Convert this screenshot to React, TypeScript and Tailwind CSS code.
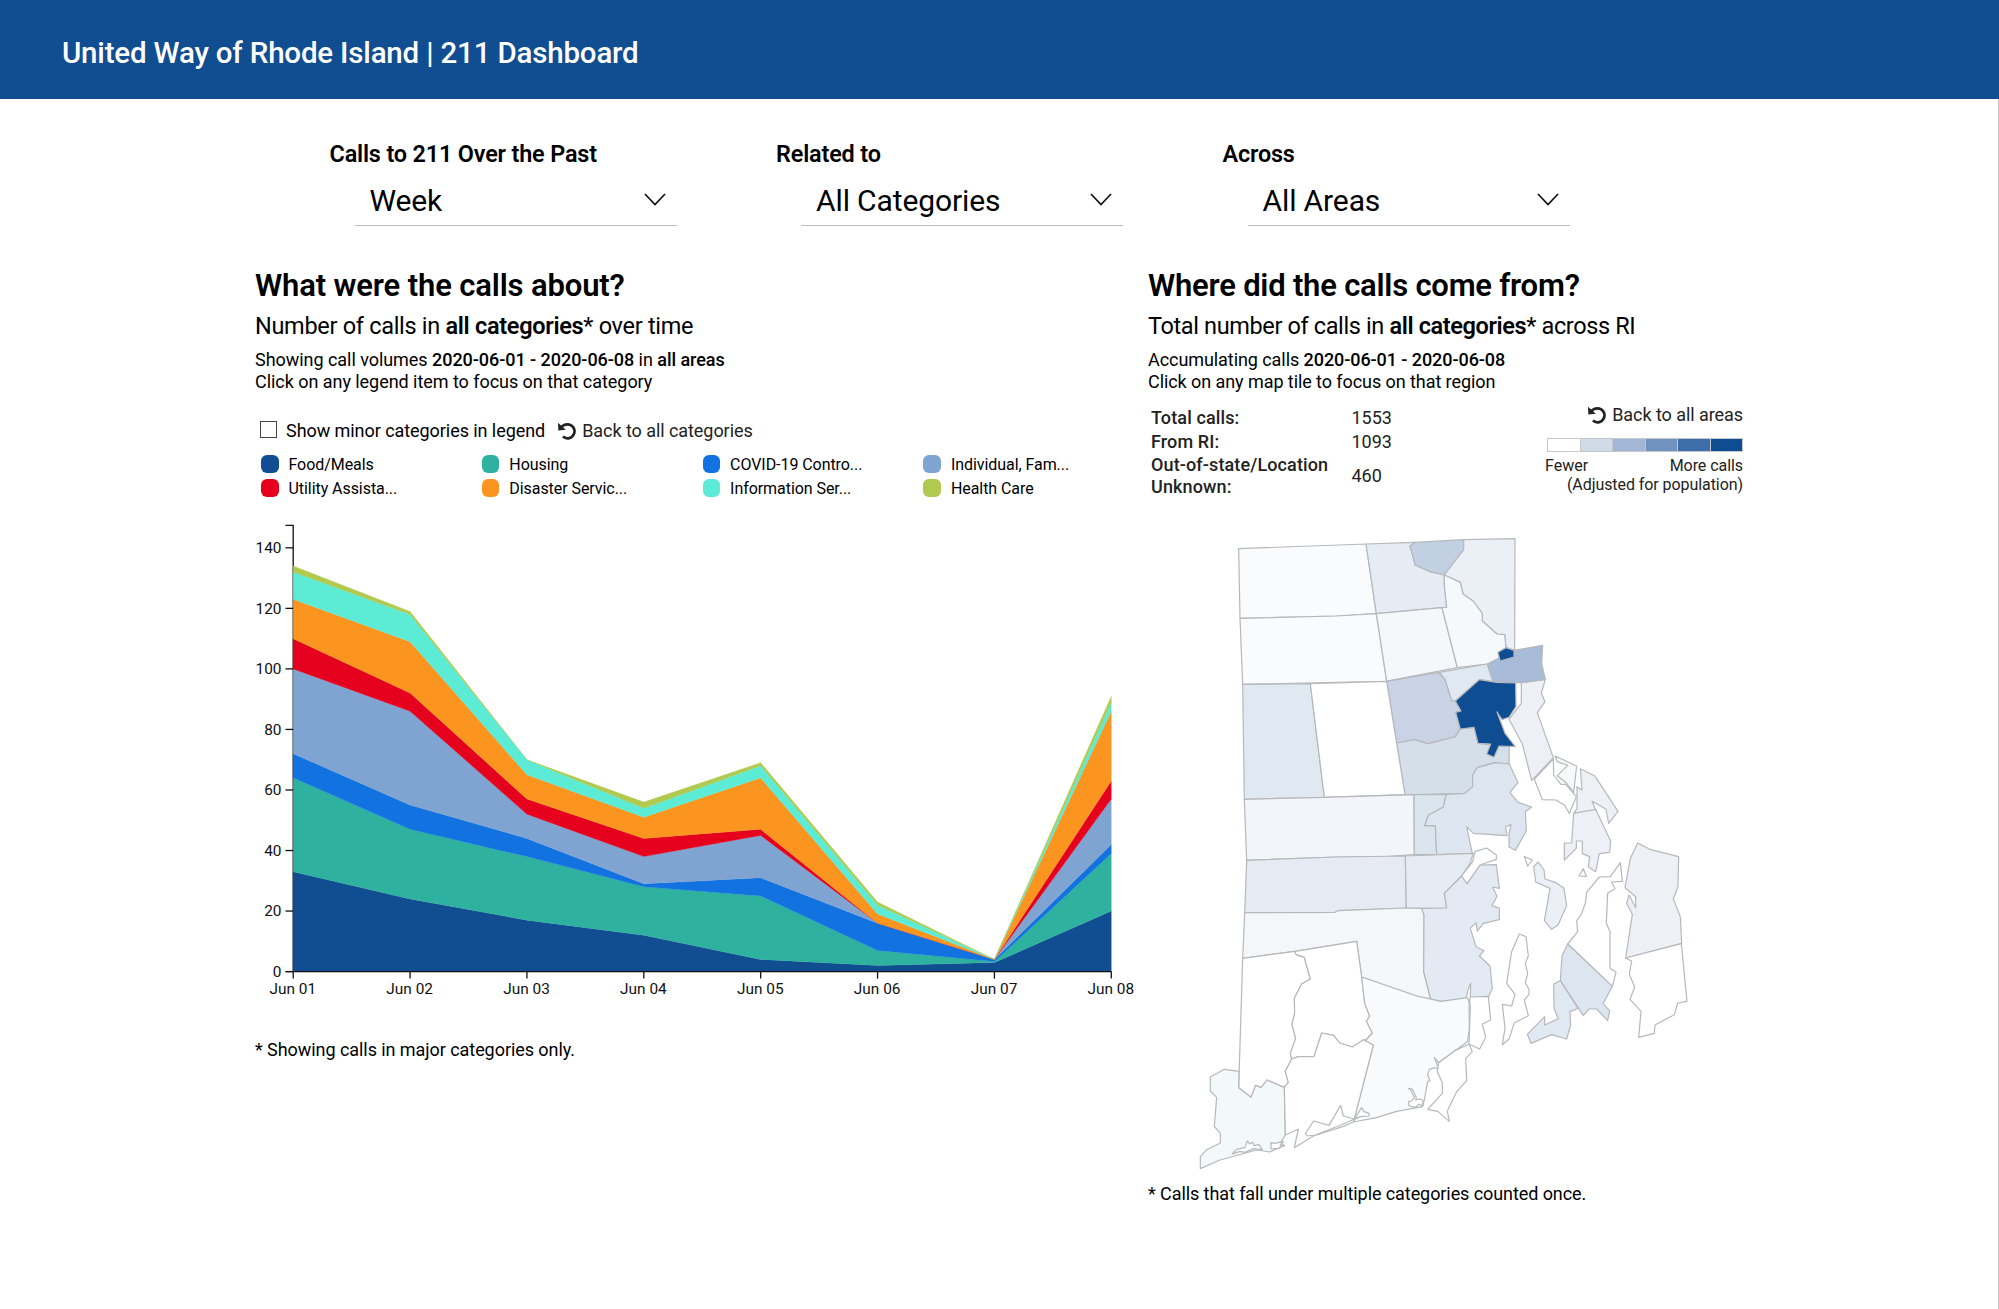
import React from "react";

const DAYS = ["Jun 01", "Jun 02", "Jun 03", "Jun 04", "Jun 05", "Jun 06", "Jun 07", "Jun 08"];

// Upper edge of each stacked band, bottom to top.
const BANDS = [
  { color: "#114d91", top: [33, 24, 17, 12, 4, 2, 3, 20] },
  { color: "#2eb19f", top: [64, 47, 38, 28, 25, 7, 3.3, 39] },
  { color: "#1172e0", top: [72, 55, 44, 29, 31, 16, 4, 42] },
  { color: "#80a4d1", top: [100, 86, 52, 38, 45, 16, 4, 57] },
  { color: "#e5001e", top: [110, 92, 57, 44, 47, 16, 4, 63] },
  { color: "#fc951f", top: [123, 109, 65, 51, 64, 19, 4, 86] },
  { color: "#5cebd5", top: [132, 118, 70, 54, 68, 22, 4, 89] },
  { color: "#b1c94e", top: [134, 119, 70, 56, 69, 23, 4, 91] },
];

const LEGEND = [
  { name: "Food/Meals", color: "bg-[#114d91]" },
  { name: "Housing", color: "bg-[#2eb19f]" },
  { name: "COVID-19 Contro...", color: "bg-[#1172e0]" },
  { name: "Individual, Fam...", color: "bg-[#80a4d1]" },
  { name: "Utility Assista...", color: "bg-[#e5001e]" },
  { name: "Disaster Servic...", color: "bg-[#fc951f]" },
  { name: "Information Ser...", color: "bg-[#5cebd5]" },
  { name: "Health Care", color: "bg-[#b1c94e]" },
];

const X0 = 38.2;
const Y0 = 461.6;
const px = (i: number) => X0 + i * 116.87;
const py = (v: number) => Y0 - v * 3.027;

function AreaChart() {
  const zero = DAYS.map(() => 0);
  return (
    <svg width="890" height="490" viewBox="0 0 890 490" className="block overflow-visible">
      <path d={`M30.5 ${py(147.4)}H${X0}V${Y0}H30.5`} fill="none" stroke="#111" strokeWidth="1.3" />
      {BANDS.map((b, k) => {
        const low = k ? BANDS[k - 1].top : zero;
        const up = b.top.map((v, i) => `${px(i)},${py(v)}`);
        const down = low.map((v, i) => `${px(i)},${py(v)}`).reverse();
        return <polygon key={b.color} points={[...up, ...down].join(" ")} fill={b.color} stroke={b.color} strokeWidth="0.3" />;
      })}
      {[0, 20, 40, 60, 80, 100, 120, 140].map((v) => (
        <g key={v}>
          <path d={`M30.5 ${py(v)}H${X0}`} stroke="#111" strokeWidth="1.3" />
          <text x="26.5" y={py(v) + 5.4} textAnchor="end" fontSize="15.4" fill="#111">{v}</text>
        </g>
      ))}
      <path d={`M${X0} ${Y0}H${px(7)}`} stroke="#111" strokeWidth="1.4" />
      {DAYS.map((d, i) => (
        <g key={d}>
          <path d={`M${px(i)} ${Y0}v7`} stroke="#111" strokeWidth="1.3" />
          <text x={px(i) - 0.4} y="484" textAnchor="middle" fontSize="15.4" fill="#111">{d}</text>
        </g>
      ))}
    </svg>
  );
}

type Region = { fill: string; p: string; dx?: number; dy?: number };

const REGIONS: Region[] = [
  { fill: "#f9fbfc", p: "146,86 528,72 559,281 440,288 150,295" },
  { fill: "#e6ecf4", p: "528,72 675,67 660,78 676,135 720,155 763,165 763,195 770,262 756,263 559,281" },
  { fill: "#c2d0e4", p: "675,67 821,59 821,89 763,165 720,155 676,135 660,78" },
  { fill: "#ebf0f6", p: "821,59 975,56 974,391 948,383 944,344 921,342 877,303 877,280 849,243 819,222 811,187 763,165 821,89" },
  { fill: "#f9fbfd", p: "150,295 440,288 559,281 590,484 158,493" },
  { fill: "#f5f8fb", p: "559,281 756,263 802,443 590,483" },
  { fill: "#f6f9fb", p: "763,165 811,187 819,222 849,243 877,280 877,303 921,342 944,344 948,383 924,397 930,424 892,432 802,443 756,263 770,262 763,195" },
  { fill: "#d5dfea", p: "620,669 673,658 715,671 795,650 811,627 852,622 864,670 958,680 957,734 915,728 862,743 848,765 848,800 825,820 720,823 645,825" },
  { fill: "#e0e8f1", p: "748,457 892,432 909,485 868,479 796,543 785,543 765,478" },
  { fill: "#c8d4e6", p: "590,484 744,457 765,478 785,543 796,543 813,573 797,577 811,627 795,650 715,671 673,658 620,669" },
  { fill: "#edf1f6", dx: 720, p: "274,488 346,478 334,520 345,545 322,578 370,713 305,782 277,672 237,598 274,550" },
  { fill: "#a8bcd9", p: "972,391 1058,376 1055,430 1066,478 993,488 909,485 892,432" },
  { fill: "#e0e8f1", p: "158,493 361,491 403,832 163,838" },
  { fill: "#ffffff", p: "361,491 590,484 645,824 403,832" },
  { fill: "#f2f5f9", p: "163,838 403,832 672,824 673,1004 600,1009 440,1011 170,1021" },
  { fill: "#dae5ee", p: "672,824 769,823 760,861 715,886 704,917 736,917 740,1004 673,1004" },
  { fill: "#dde5f0", p: "769,823 825,820 848,800 848,765 862,743 915,728 958,732 984,788 960,817 984,847 1025,861 1006,875 1009,933 976,991 957,981 957,940 963,914 947,921 951,947 850,940 830,920 847,1000 740,1004 736,917 704,917 715,886 760,861" },
  { fill: "#e5eaf3", p: "170,1021 440,1011 646,1008 649,1164 445,1172 435,1177 164,1178" },
  { fill: "#e6ecf4", p: "646,1008 850,1000 840,1030 815,1068 763,1120 770,1164 649,1165" },
  { fill: "#f3f7fa", p: "164,1178 435,1177 445,1172 649,1164 695,1165 702,1185 701,1355 722,1437 680,1428 515,1371 500,1264 315,1294 158,1315" },
  { fill: "#e4eaf3", p: "695,1165 770,1164 763,1120 815,1068 831,1091 870,1035 919,1034 928,1105 908,1101 921,1129 906,1157 928,1165 928,1199 880,1210 862,1233 858,1208 841,1225 858,1280 882,1292 868,1308 900,1338 907,1405 897,1429 753,1444 722,1437 701,1355 702,1185" },
  { fill: "#ffffff", p: "855,995 890,984 919,1005 919,1018 870,1035 831,1091 815,1068 848,1025" },
  { fill: "#ffffff", p: "158,1315 315,1294 318,1303 343,1312 361,1377 335,1392 313,1435 314,1480 306,1513 317,1555 301,1600 305,1617 286,1654 295,1688 281,1702 231,1680 213,1703 197,1696 183,1732 146,1703" },
  { fill: "#ffffff", p: "315,1294 500,1264 515,1371 524,1450 539,1489 529,1503 547,1539 528,1560 487,1581 449,1569 431,1546 395,1539 372,1610 325,1610 305,1617 301,1600 317,1555 306,1513 314,1480 313,1435 335,1392 361,1377 343,1312 318,1303" },
  { fill: "#f3f8fb", p: "147,1654 103,1648 61,1671 61,1713 80,1732 73,1820 91,1840 91,1869 50,1889 31,1910 31,1946 90,1920 200,1890 240,1896 283,1877 272,1867 286,1845 283,1702 231,1680 213,1703 197,1696 183,1732 146,1703" },
  { fill: "#f8fafb", p: "515,1371 680,1428 753,1444 837,1432 838,1530 832,1565 795,1592 745,1628 733,1612 747,1650 735,1643 718,1648 713,1665 720,1682 713,1685 703,1740 698,1760 620,1774 560,1793 490,1806 493,1796 550,1575 520,1559 528,1560 547,1539 529,1503 539,1489 524,1450" },
  { fill: "#ffffff", p: "305,1617 325,1610 372,1610 395,1539 431,1546 449,1569 487,1581 520,1559 550,1575 493,1796 490,1806 460,1819 370,1848 313,1883 325,1827 286,1845 283,1702 295,1688 286,1654" },
  { fill: "#ffffff", p: "493,1797 460,1788 452,1756 417,1816 371,1803 346,1840 352,1848 376,1845 460,1812" },
  { fill: "#ffffff", dy: 780, p: "493,1018 515,983 522,995 537,1000 537,1008 510,1010" },
  { fill: "#ffffff", dy: 780, p: "127,1122 140,1108 165,1103 172,1083 180,1092 188,1087 192,1097 207,1094 217,1109 190,1106 165,1117 150,1114" },
  { fill: "#ffffff", dy: 780, p: "243,1088 255,1090 280,1085 270,1096 283,1097 265,1104 243,1107" },
  { fill: "#ffffff", dx: 570, dy: 1140, p: "85,565 97,567 109,593 107,600 120,597 129,602 128,618 118,613 105,622 88,618 85,605 95,603 103,592 90,567" },
  { fill: "#ffffff", dx: 570, dy: 1140, p: "268,291 325,289 332,360 307,372 317,412 299,447 267,432 271,322" },
  { fill: "#ffffff", dx: 570, dy: 1140, p: "267,432 277,455 257,475 260,542 230,575 202,633 208,664 173,634 143,628 187,580 187,548 172,515 176,488 225,452" },
  { fill: "#ffffff", dx: 570, dy: 1140, p: "272,250 264,270 260,290 268,305 271,290" },
  { fill: "#ffffff", dx: 570, dy: 1140, p: "418,102 438,110 445,168 436,190 443,220 436,248 447,268 447,283 433,300 445,347 403,368 387,418 367,434 375,385 367,313 395,318 405,283 380,250 395,155" },
  { fill: "#ebf0f6", dx: 720, dy: 660, p: "325,366 342,390 345,417 378,428 402,445 410,497 384,555 365,568 343,542 360,445 317,426 311,380" },
  { fill: "#ffffff", dx: 720, dy: 660, p: "283,350 307,360 293,378" },
  { fill: "#ffffff", dx: 720, dy: 660, p: "460,386 469,409 447,408" },
  { fill: "#ffffff", dx: 720, dy: 660, p: "571,368 577,424 545,426 555,446 533,460 529,550 540,575 540,685 558,697 547,739 413,612 443,575 440,542 453,525 466,490 470,457 508,411 541,410" },
  { fill: "#dde5f0", dx: 570, dy: 1140, p: "563,132 697,259 669,311 689,332 683,362 650,327 627,327 610,347 541,242 546,168" },
  { fill: "#e0e9f2", dx: 570, dy: 1140, p: "541,242 594,325 570,335 572,375 560,417 515,404 453,430 442,403 494,350 494,375 535,356 522,325 521,252" },
  { fill: "#edf1f6", dx: 720, dy: 660, p: "623,309 660,328 746,350 744,440 730,477 751,530 755,610 587,654 607,523 590,490 597,465 617,503 617,470 585,443 601,355" },
  { fill: "#ffffff", dx: 570, dy: 1140, p: "737,174 904,131 921,304 893,309 883,344 825,375 823,400 776,412 783,334 750,298 764,262 748,222 755,184" },
  { fill: "#ffffff", dx: 720, dy: 660, p: "370,57 371,105 393,133 407,133 439,170 418,220 403,195 378,180 337,179 313,117" },
  { fill: "#f6f8fb", dx: 720, dy: 660, p: "375,48 440,78 431,157 410,130 382,107 413,76 382,65" },
  { fill: "#edf1f6", dx: 720, dy: 660, p: "451,86 494,107 564,214 536,250 528,208 486,184 497,210 431,221 441,205 441,140 456,150" },
  { fill: "#edf0f6", dx: 720, dy: 660, p: "431,220 497,208 542,303 539,337 508,341 497,395 475,380 479,350 457,341 457,303 439,303 439,325 403,360 403,309 425,309" },
];

const DARK_REGIONS = [
  "948,383 972,391 972,411 930,423 924,397",
  "868,479 920,487 977,489 978,560 957,592 936,599 921,576 945,640 976,680 927,678 912,712 890,702 902,672 864,670 852,622 811,627 797,577 813,573 796,543",
];

function RhodeIslandMap() {
  return (
    <svg width="510" height="660" viewBox="0 0 1530 1980" className="block">
      <g stroke="#b6b8bb" strokeWidth="3.6" strokeLinejoin="round">
        {REGIONS.map((r, i) => (
          <polygon key={i} points={r.p} fill={r.fill} transform={`translate(${r.dx ?? 0} ${r.dy ?? 0})`} />
        ))}
        {DARK_REGIONS.map((p) => (
          <polygon key={p} points={p} fill="#0f4d92" />
        ))}
      </g>
    </svg>
  );
}

function UndoIcon() {
  return (
    <svg width="20" height="19" viewBox="0 0 20 19" className="shrink-0">
      <path d="M4.2 5.2C6 3.2 8.200 2.300 10.500 2.300a7 7 0 1 1-4.600 12.300" fill="none" stroke="#222" strokeWidth="2.7" />
      <path d="M1 .8l.3 7.600 7.500-.6z" fill="#222" />
    </svg>
  );
}

function Filter({ label, value }: { label: string; value: string }) {
  return (
    <div className="w-[446.5px]">
      <div className="h-8 text-[23.4px] leading-8 font-semibold tracking-[-0.16px]">{label}</div>
      <div className="ml-[25px] mt-1 flex h-[52px] w-[322px] items-center justify-between border-b border-[#bdbdbd] pl-[15px] pr-[11px] pt-[3px]">
        <span className="text-[30px] leading-10 tracking-[-0.12px]">{value}</span>
        <svg width="22" height="13" viewBox="0 0 22 13" className="-mt-[3px]">
          <path d="M1 1l10 10.500L21 1" fill="none" stroke="#111" strokeWidth="1.7" />
        </svg>
      </div>
    </div>
  );
}

export default function App() {
  return (
    <div className="h-[1309px] w-[1999px] overflow-hidden bg-white font-['Roboto',sans-serif] whitespace-nowrap text-black">
      <header className="flex h-[99px] items-center bg-[#114d91] pl-[62px] pb-[2px] pt-2">
        <h1 className="text-[29.5px] leading-10 font-medium tracking-[-0.18px] text-white">United Way of Rhode Island | 211 Dashboard</h1>
      </header>

      <div className="h-[1210px] border-r border-[#c4c4c4]">
        <div className="flex pl-[329.500px] pt-[39px]">
          <Filter label="Calls to 211 Over the Past" value="Week" />
          <Filter label="Related to" value="All Categories" />
          <Filter label="Across" value="All Areas" />
        </div>

        <main className="flex pl-[255px] pt-10">
          <section className="w-[893px]">
            <h2 className="text-[31px] leading-10 font-semibold tracking-[-0.14px]">What were the calls about?</h2>
            <p className="mt-1 text-[23.500px] leading-8 tracking-[-0.3px]">Number of calls in <b className="font-semibold">all categories</b>* over time</p>
            <div className="mt-[7px] text-[18px] leading-[22px] tracking-[-0.045px]">
              <p>Showing call volumes <b className="font-medium">2020-06-01 - 2020-06-08</b> in <b className="font-medium">all areas</b></p>
              <p>Click on any legend item to focus on that category</p>
            </div>
            <div className="mt-[26px] flex h-6 items-center text-[18px] leading-6 tracking-[-0.06px]">
              <span className="ml-[5px] mr-[9px] size-[17px] -mt-1 border border-[#444] bg-white" />
              <span>Show minor categories in legend</span>
              <span className="ml-3 mr-[5px]"><UndoIcon /></span>
              <span className="text-[#222]">Back to all categories</span>
            </div>
            <div className="mt-[10px] grid grid-cols-[repeat(4,220.800px)] pl-[6px] text-[16px] leading-6 tracking-[-0.06px]">
              {LEGEND.map((l) => (
                <div key={l.name} className="flex h-6 items-center">
                  <span className={`mr-[10px] -mt-[2px] size-[17.500px] rounded-[6px] ${l.color}`} />
                  {l.name}
                </div>
              ))}
            </div>
            <div className="mt-[9px]"><AreaChart /></div>
            <p className="mt-[38px] text-[18px] leading-6 tracking-[-0.06px]">* Showing calls in major categories only.</p>
          </section>

          <section className="w-[595px]">
            <h2 className="text-[31px] leading-10 font-semibold tracking-[-0.22px]">Where did the calls come from?</h2>
            <p className="mt-1 text-[23.500px] leading-8 tracking-[-0.37px]">Total number of calls in <b className="font-semibold">all categories</b>* across RI</p>
            <div className="mt-[7px] text-[18px] leading-[22px] tracking-[-0.07px]">
              <p>Accumulating calls <b className="font-medium">2020-06-01 - 2020-06-08</b></p>
              <p>Click on any map tile to focus on that region</p>
            </div>
            <div className="mt-[11px] flex h-[106px] justify-between text-[#222]">
              <div className="grid grid-cols-[200.5px_auto] grid-rows-[24px_24px_44px] content-start items-center pl-[3px] pt-[2px] text-[18px] leading-[22px]">
                <b className="font-medium tracking-[0.12px]">Total calls:</b>
                <span>1553</span>
                <b className="font-medium tracking-[0.12px]">From RI:</b>
                <span>1093</span>
                <b className="font-medium tracking-[0.12px]">Out-of-state/Location<br />Unknown:</b>
                <span>460</span>
              </div>
              <div className="w-[198px]">
                <div className="flex h-6 -mt-px items-center justify-end gap-[5px] text-[18px] leading-6 tracking-[-0.06px]"><UndoIcon />Back to all areas</div>
                <div className="ml-[2px] mt-[11px] grid h-[14px] grid-cols-6 gap-px border border-[#c4c8cc] bg-[#c4c8cc]">
                  <span className="bg-white" />
                  <span className="bg-[#cfdce8]" />
                  <span className="bg-[#a1b7d5]" />
                  <span className="bg-[#7092be]" />
                  <span className="bg-[#3e6ea9]" />
                  <span className="bg-[#0f4d92]" />
                </div>
                <div className="mt-1 flex justify-between text-[16px] leading-[19px]"><span>Fewer</span><span className="tracking-[-0.06px]">More calls</span></div>
                <div className="text-right text-[16px] leading-[19px] tracking-[-0.07px]">(Adjusted for population)</div>
              </div>
            </div>
            <div className="ml-[42px] mt-[10px]"><RhodeIslandMap /></div>
            <p className="mt-[2px] text-[18px] leading-6 tracking-[-0.08px]">* Calls that fall under multiple categories counted once.</p>
          </section>
        </main>
      </div>
    </div>
  );
}
